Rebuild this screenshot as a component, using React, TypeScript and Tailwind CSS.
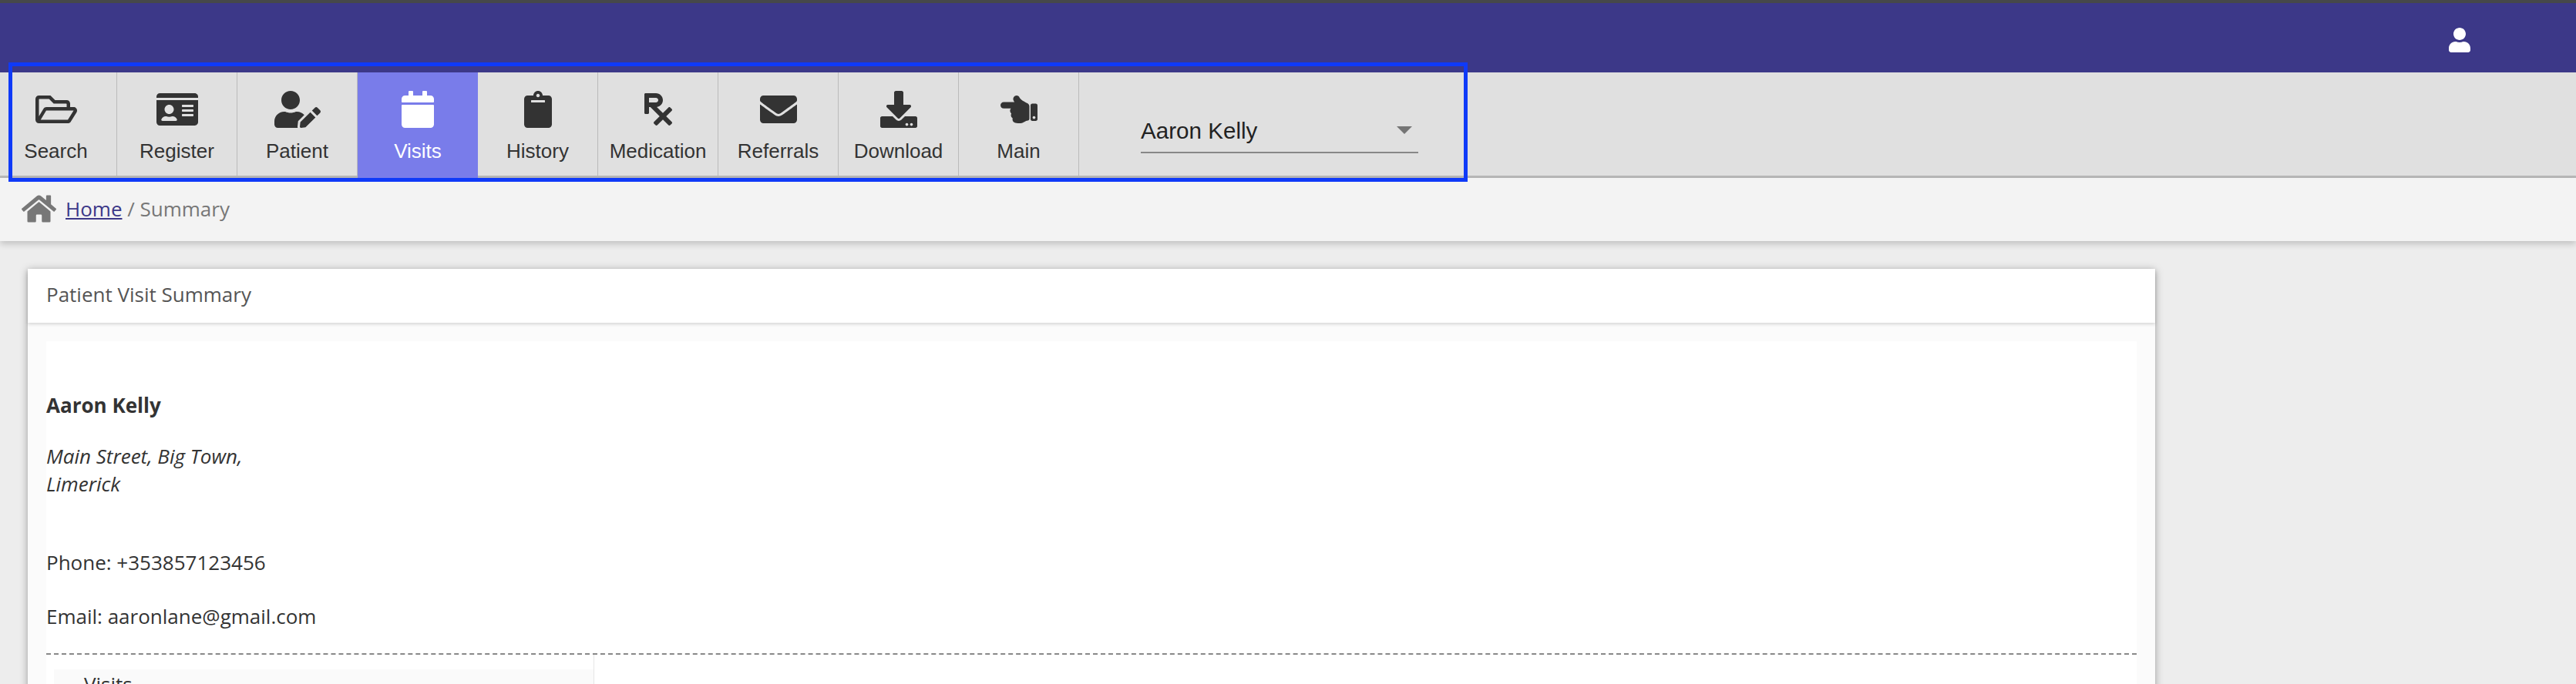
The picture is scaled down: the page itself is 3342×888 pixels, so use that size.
import React from "react";
import {
  FaCalendar,
  FaClipboard,
  FaDownload,
  FaEnvelope,
  FaHandPointLeft,
  FaHome,
  FaIdCard,
  FaPrescription,
  FaRegFolderOpen,
  FaUser,
  FaUserEdit,
} from "react-icons/fa";

const tabs = [
  { label: "Search", Icon: FaRegFolderOpen, iconClass: "h-[48px] w-[54px]" },
  { label: "Register", Icon: FaIdCard, iconClass: "h-[48px] w-[54px]" },
  { label: "Patient", Icon: FaUserEdit, iconClass: "h-[48px] w-[60px]" },
  { label: "Visits", Icon: FaCalendar, iconClass: "h-[48px] w-[42px]", active: true },
  { label: "History", Icon: FaClipboard, iconClass: "h-[48px] w-[36px]" },
  { label: "Medication", Icon: FaPrescription, iconClass: "h-[48px] w-[36px]" },
  { label: "Referrals", Icon: FaEnvelope, iconClass: "h-[48px] w-[48px]" },
  { label: "Download", Icon: FaDownload, iconClass: "h-[48px] w-[48px]" },
  { label: "Main", Icon: FaHandPointLeft, iconClass: "h-[48px] w-[48px]" },
];

const App: React.FC = () => {
  return (
    <div className="relative h-[888px] overflow-hidden bg-[#ededed] font-['Open_Sans',sans-serif] text-[26px] leading-[36px] text-[#333]">
      <header className="flex h-[94px] items-center justify-end border-t-4 border-[#46484a] bg-[#3c3888] pr-[137px] pt-[6px] text-white">
        <FaUser className="h-[32px] w-[28px]" />
      </header>

      <nav className="flex h-[137px] border-b-[3px] border-b-[#b8b8b8] bg-[#e0e0e0] shadow-[0_1px_0_#fff] font-['Liberation_Sans',Arial,sans-serif]">
        {tabs.map(({ label, Icon, iconClass, active }, i) => (
          <div
            key={label}
            className={`-mb-[3px] flex flex-col items-center pt-[24px] ${
              i === 0 ? "w-[152px] pr-[6px]" : "w-[156px]"
            } ${active ? "h-[137px] bg-[#797cea] text-white" : "h-[134px] border-r border-[#bbb] text-[#333]"}`}
          >
            <Icon className={iconClass} />
            <span className="mt-[15px] text-[26px] leading-[30px]">{label}</span>
          </div>
        ))}
        <div className="ml-[80px] mt-[52px] flex h-[53px] w-[360px] items-start justify-between border-b-2 border-[#888] pt-[2px] text-[29.6px] leading-[44px] text-[#222]">
          <span>Aaron Kelly</span>
          <span className="mr-[8px] mt-[16px] h-0 w-0 border-x-[10px] border-t-[10px] border-x-transparent border-t-[#757575]" />
        </div>
      </nav>

      <div className="flex h-[82px] items-center bg-[#f3f3f3] pb-[2px] pl-[28px] shadow-[0_4px_8px_rgba(0,0,0,0.18)]">
        <FaHome className="h-[40px] w-[45px] text-[#777]" />
        <span className="ml-[12px] text-[#777]">
          <a className="text-[#3c3888] underline">Home</a> / Summary
        </span>
      </div>

      <main className="px-[36px] pt-[36px]">
        <section className="w-[2760px] bg-[#fbfbfb] shadow-[0_2px_10px_rgba(0,0,0,0.35)]">
          <div className="flex h-[70px] items-center bg-white pb-[4px] pl-[24px] text-[#555] shadow-[0_2px_4px_rgba(0,0,0,0.15)]">
            Patient Visit Summary
          </div>
          <div className="px-[24px] pt-[24px]">
            <div className="bg-white">
              <div className="border-b-2 border-dashed border-[#888] pt-[65px] pb-[30px]">
                <p className="font-bold">Aaron Kelly</p>
                <p className="mt-[30px] italic">
                  Main Street, Big Town,
                  <br />
                  Limerick
                </p>
                <p className="mt-[66px]">Phone: +353857123456</p>
                <p className="mt-[34px]">Email: aaronlane@gmail.com</p>
              </div>
              <div className="ml-[10px] h-[200px] w-[701px] border-r border-[#e6e6e6] pt-[19px]">
                <div className="h-full bg-[#fafafa] pl-[39px] pt-[1px]">Visits</div>
              </div>
            </div>
          </div>
        </section>
      </main>

      {/* blue annotation box drawn over the toolbar */}
      <div className="pointer-events-none absolute left-[11px] top-[81px] h-[155px] w-[1893px] border-[5px] border-[#0f3af8]" />
    </div>
  );
};

export default App;
